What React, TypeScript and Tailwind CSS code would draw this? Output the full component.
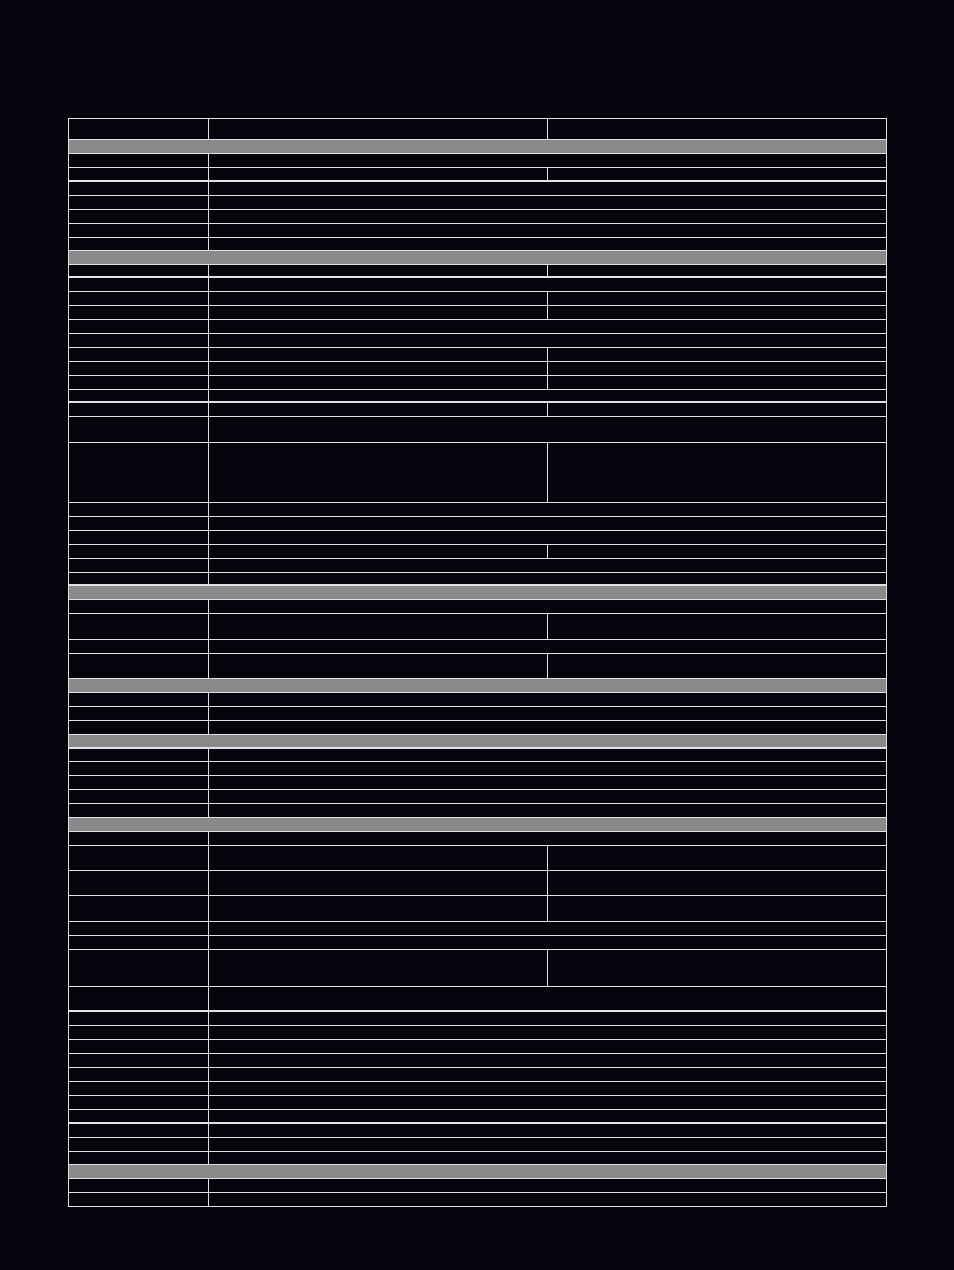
// Spec sheet grid: every row is [kind, height]. "h" = header (3 cols), "g" = grey band,
// "2" = label + spanning value, "3" = label + two values.
type Kind = "h" | "g" | "2" | "3";

const lines = [
  118, 139, 153, 167, 181, 195, 209, 223, 237, 250, 264, 277, 291, 305, 319, 333, 347, 361, 375, 389,
  402, 416, 442, 502, 516, 530, 544, 558, 572, 585, 599, 613, 639, 653, 678, 692, 706, 720, 734, 748,
  761, 775, 789, 803, 817, 831, 845, 870, 895, 921, 935, 949, 986, 1011, 1025, 1039, 1053, 1067, 1081,
  1095, 1109, 1123, 1137, 1151, 1164, 1178, 1192, 1206,
];

const kinds: Kind[] = [
  "h", "g", "2", "3", "2", "2", "2", "2", "2", "g",
  "3", "2", "3", "3", "2", "2", "3", "3", "3", "2",
  "3", "2", "3", "2", "2", "2", "3", "2", "2", "g",
  "2", "3", "2", "3", "g", "2", "2", "2", "g", "2",
  "2", "2", "2", "2", "g", "2", "3", "3", "3", "2",
  "2", "3", "2", "2", "2", "2", "2", "2", "2", "2",
  "2", "2", "2", "2", "g", "2", "2",
];

// rows whose bottom rule is heavier
const thick = new Set([181, 277, 402, 585, 748, 1011, 1123]);

function Row({ kind, height, heavy }: { kind: Kind; height: number; heavy: boolean }) {
  const rule = heavy ? "border-b-2" : "border-b";
  if (kind === "g") {
    return <div className={`${rule} border-[#e2e2e2] bg-[#898989]`} style={{ height }} />;
  }
  return (
    <div className={`flex ${rule} border-[#e2e2e2]`} style={{ height }}>
      <div className="w-[140px] shrink-0 border-r border-[#e2e2e2]" />
      {kind === "2" ? (
        <div className="flex-1" />
      ) : (
        <>
          <div className="w-[339px] shrink-0 border-r border-[#e2e2e2]" />
          <div className="flex-1" />
        </>
      )}
    </div>
  );
}

export default function App() {
  return (
    <div className="min-h-[1270px] w-full bg-[#05040c] pt-[118px]">
      <div className="ml-[68px] w-[819px] border-x border-t border-[#e2e2e2]">
        {kinds.map((kind, i) => (
          <Row
            key={i}
            kind={kind}
            height={lines[i + 1] - lines[i]}
            heavy={thick.has(lines[i + 1])}
          />
        ))}
      </div>
    </div>
  );
}
